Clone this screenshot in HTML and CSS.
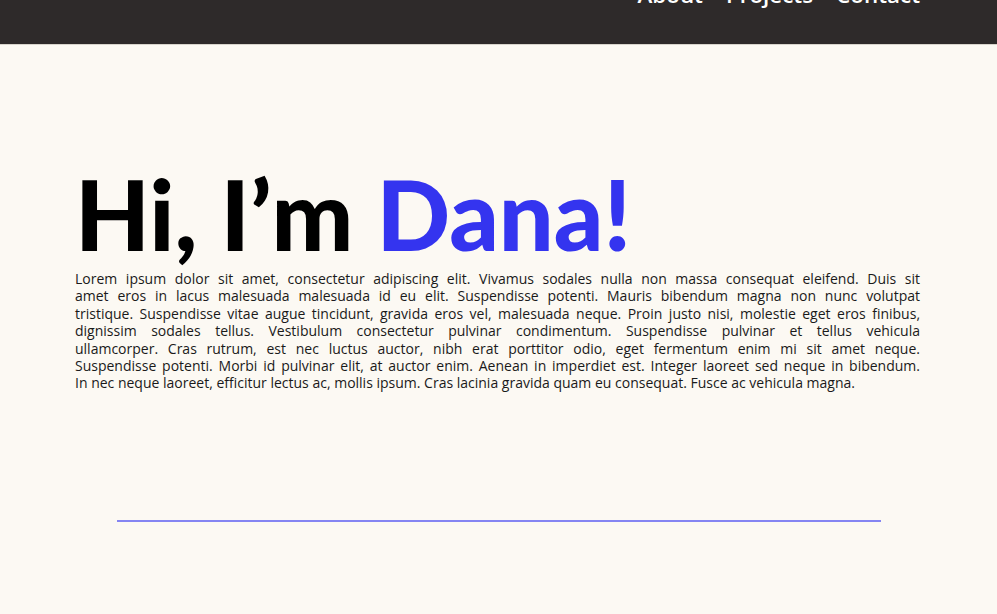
FILE: index.html
```html
<!DOCTYPE html>
<html lang="en">
<head>
<meta charset="utf-8">
<title>Dana</title>
<link rel="stylesheet" href="styles.css">
</head>
<body>
<header class="topbar">
  <nav class="nav">
    <a class="nav-link" href="#">About</a>
    <a class="nav-link" href="#">Projects</a>
    <a class="nav-link" href="#">Contact</a>
  </nav>
</header>
<main class="hero">
  <h1 class="title">Hi, I’m <span class="accent">Dana!</span></h1>
  <div class="intro">
    <span class="line">Lorem ipsum dolor sit amet, consectetur adipiscing elit. Vivamus sodales nulla non massa consequat eleifend. Duis sit</span>
    <span class="line">amet eros in lacus malesuada malesuada id eu elit. Suspendisse potenti. Mauris bibendum magna non nunc volutpat</span>
    <span class="line">tristique. Suspendisse vitae augue tincidunt, gravida eros vel, malesuada neque. Proin justo nisi, molestie eget eros finibus,</span>
    <span class="line">dignissim sodales tellus. Vestibulum consectetur pulvinar condimentum. Suspendisse pulvinar et tellus vehicula</span>
    <span class="line">ullamcorper. Cras rutrum, est nec luctus auctor, nibh erat porttitor odio, eget fermentum enim mi sit amet neque.</span>
    <span class="line">Suspendisse potenti. Morbi id pulvinar elit, at auctor enim. Aenean in imperdiet est. Integer laoreet sed neque in bibendum.</span>
    <span class="line last">In nec neque laoreet, efficitur lectus ac, mollis ipsum. Cras lacinia gravida quam eu consequat. Fusce ac vehicula magna.</span>
  </div>
  <hr class="divider">
</main>
</body>
</html>
```
FILE: styles.css
```css
html, body {
  margin: 0;
  padding: 0;
}
body {
  background: #fcf9f3;
  font-family: "Open Sans", "Lato", sans-serif;
  color: #111;
  height: 614px;
  overflow: hidden;
}
.topbar {
  height: 45px;
  background: #2e2a2a;
  overflow: hidden;
  border-bottom: 1px solid #d8d4cc;
  box-sizing: border-box;
}
.nav {
  display: flex;
  justify-content: flex-end;
  gap: 23px;
  padding-right: 77px;
  margin-top: -16px;
}
.nav-link {
  color: #ffffff;
  text-decoration: none;
  font-size: 22.4px;
  font-weight: 600;
  line-height: 22px;
}
.hero {
  padding: 0 77px 0 75px;
}
.title {
  margin: 121px 0 0 0;
  font-family: "Lato", "Open Sans", sans-serif;
  font-size: 97px;
  font-weight: 900;
  line-height: 96px;
  color: #000;
  letter-spacing: 0;
}
.accent {
  color: #3434ef;
}
.intro {
  margin-top: 8px;
  font-size: 14px;
  line-height: 17.4px;
  color: #1a1a1a;
}
.line {
  display: block;
  text-align: justify;
  text-align-last: justify;
  white-space: nowrap;
}
.line.last {
  text-align-last: left;
}
.divider {
  border: none;
  height: 2px;
  background: #8585f2;
  margin: 128px 39px 0 42px;
}
```
